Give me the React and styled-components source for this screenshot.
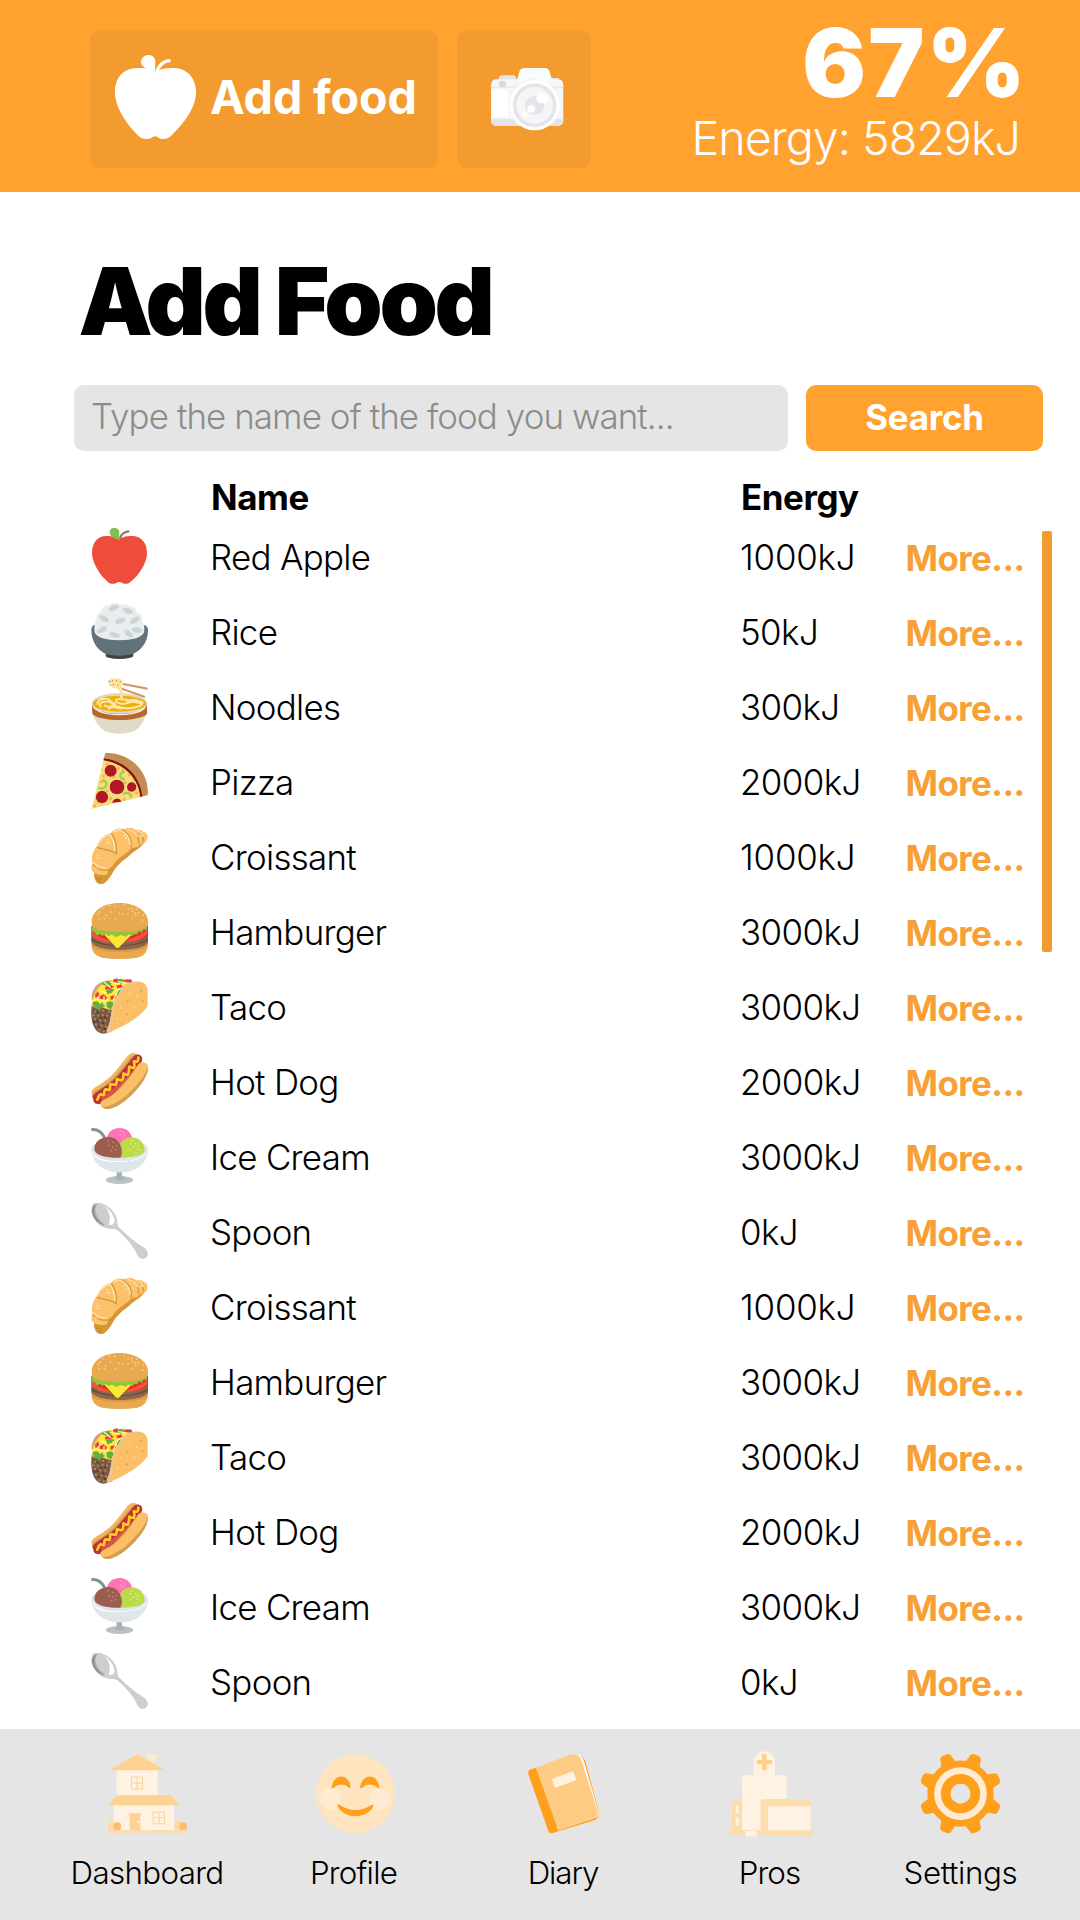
import React from "react";
import styled, { createGlobalStyle } from "styled-components";

const GlobalStyle = createGlobalStyle`
  *, *::before, *::after { box-sizing: border-box; }
  body { margin: 0; background: #fff; color: #000; font-family: Inter, "Liberation Sans", sans-serif; }
  button { border: 0; font: inherit; cursor: pointer; text-align: left; }
  svg { display: block; overflow: visible; flex: none; }
`;

const Screen = styled.div`
  width: 1080px;
  height: 1920px;
  display: flex;
  flex-direction: column;
  overflow: hidden;
`;

const Header = styled.header`
  height: 192px;
  flex: none;
  display: flex;
  justify-content: space-between;
  padding-left: 90px;
  background: #ffa230;
  color: #fff;
`;

const HeaderActions = styled.div`
  display: flex;
  gap: 19px;
  padding-top: 30px;
`;

const HeaderButton = styled.button`
  width: ${(p) => p.$width}px;
  height: 138px;
  display: flex;
  align-items: center;
  gap: 14px;
  padding: ${(p) => p.$padding};
  border-radius: 10px;
  background: #f39b2f;
  color: #fff;
  font-size: 46.6px;
  font-weight: 650;
  line-height: 60px;
  letter-spacing: -0.1px;
  white-space: nowrap;
`;

const Stats = styled.div`
  padding: 16px 60px 0 0;
  text-align: right;
  white-space: nowrap;
`;

const Percent = styled.div`
  margin-right: -7.5px;
  font-size: 94.5px;
  font-weight: 900;
  line-height: 94px;
  letter-spacing: 2.2px;
`;

const EnergyTotal = styled.div`
  font-size: 46.6px;
  font-weight: 285;
  line-height: 56px;
  letter-spacing: -0.98px;
`;

const Title = styled.h1`
  margin: 62px 0 37px 78.5px;
  font-size: 93.5px;
  font-weight: 900;
  line-height: 94px;
  letter-spacing: -3.33px;
`;

const SearchRow = styled.div`
  display: flex;
  gap: 18px;
  height: 66px;
  margin-left: 74px;
  font-size: 34.9px;
  line-height: 64px;
`;

const SearchField = styled.div`
  width: 714px;
  padding-left: 17px;
  border-radius: 10px;
  background: #e5e5e5;
  color: #8c8c8c;
  font-weight: 270;
  line-height: 63px;
  letter-spacing: -0.91px;
  white-space: nowrap;
`;

const SearchButton = styled.button`
  width: 237px;
  padding: 0 0 2px;
  border-radius: 10px;
  background: #ffa230;
  color: #fff;
  font-weight: 650;
  letter-spacing: -0.2px;
  && { text-align: center; line-height: 62px; }
`;

const Row = styled.div`
  display: grid;
  grid-template-columns: 119px 530px 165.5px 1fr;
  align-items: center;
  height: 75px;
  padding-left: 91px;
  font-size: 34.9px;
  font-weight: 270;
  line-height: 50px;
  letter-spacing: -0.7px;
  white-space: nowrap;
`;

const HeadRow = styled(Row)`
  height: 68px;
  padding: 21px 0 0 92px;
  font-weight: 650;
  letter-spacing: -0.4px;
`;

const List = styled.div`
  display: flex;
`;

const Rows = styled.div`
  width: 1042px;
`;

const Cell = styled.div`
  padding-top: 1px;
  letter-spacing: ${(p) => p.$tracking ?? "inherit"};
`;

const More = styled.a`
  padding-top: 2px;
  color: #f6a037;
  font-weight: 650;
  letter-spacing: -0.55px;
`;

const Scrollbar = styled.div`
  width: 10px;
  height: 421px;
  margin-top: 12px;
  border-radius: 2px;
  background: #f39b2f;
`;

const Nav = styled.nav`
  height: 191px;
  margin-top: auto;
  flex: none;
  display: grid;
  grid-template-columns: repeat(4, 208px) 171px;
  padding-left: 43px;
  background: #e5e5e5;
`;

const NavItem = styled.a`
  display: flex;
  flex-direction: column;
  align-items: center;
  padding-top: 25px;
  font-size: 31.3px;
  font-weight: 270;
  line-height: 40px;
  letter-spacing: ${(p) => p.$tracking}px;

  svg { margin-bottom: 20px; }
`;

const NavLabel = styled.span`
  padding-right: ${(p) => p.$inset}px;
`;

const AppleShape = ({ body, leaf, stem }) => (
  <>
    <path fill={body} d="M148 59C140 50 125 48 110 48C80 48 66 70 66 100C66 130 93 170 113 185C121 193 135 193 140 188Q148 184 156 188C162 193 174 193 182 185C204 170 231 130 231 100C231 68 214 48 186 48C170 48 156 50 148 59Z" />
    <path fill={leaf} d="M148 59C130 56 119 48 119 36C119 21 141 19 147 31C149 37 147 48 148 59Z" />
    <path fill="none" stroke={stem} strokeWidth="6" d="M149 57Q155 36 178 34" />
  </>
);

const WhiteApple = () => (
  <svg width="81" height="84" viewBox="66 24 165 167" preserveAspectRatio="none">
    <path fill="#fff" d="M148 57C140 50 125 50 110 50C80 51 66 72 66 98C66 130 93 165 113 184C120 192 135 193 141 188Q148 183 154 188C161 193 174 192 181 184C204 162 231 130 231 98C231 70 214 51 186 50C170 50 158 51 150 59Z" />
    <path fill="#fff" d="M148 62C140 53 119 51 119 38C120 20 147 20 148 36Z" />
    <path fill="none" stroke="#fff" strokeWidth="6.5" d="M151 59Q157 36 179 35" />
  </svg>
);

const Camera = () => (
  <svg width="73" height="62.3" viewBox="1207 204 204 187" preserveAspectRatio="none">
    <path fill="#e3e5e8" d="M1229 240V233Q1230 226 1237 226H1270Q1277 226 1278 240ZM1374 234H1394Q1399 235 1399 242H1374Z" />
    <path fill="#f5f6f8" d="M1207 255Q1208 238 1223 238H1280L1286 216Q1289 204 1302 204H1355Q1368 204 1371 216L1377 238H1394Q1409 239 1409 255V362Q1408 377 1392 377H1224Q1208 377 1207 362Z" />
    <path fill="#fafbfc" d="M1282 240L1287 216Q1290 205 1302 205H1355Q1368 205 1371 216L1376 250H1350Q1325 220 1282 250Z" />
    <path fill="#e3e5e8" d="M1207 357H1409V362Q1408 377 1392 377H1224Q1208 377 1207 362ZM1207 260H1290V263H1207ZM1375 260H1409V263H1375Z" />
    <rect x="1209" y="269" width="46" height="82" rx="6" fill="#fff" />
    <circle cx="1239" cy="252" r="10" fill="#d6d8da" />
    <ellipse cx="1329" cy="316" rx="70" ry="75" fill="#fff" />
    <ellipse cx="1329" cy="316" rx="61" ry="66" fill="#e3e5e8" />
    <ellipse cx="1329" cy="316" rx="51" ry="55" fill="#f5f6f8" />
    <ellipse cx="1329" cy="316" rx="27" ry="29" fill="#e3e5e8" />
    <circle cx="1350" cy="294" r="16" fill="#fff" />
    <circle cx="1319" cy="327" r="11" fill="#fff" />
    <circle cx="1301" cy="345" r="7" fill="#fff" />
  </svg>
);

const FoodSvg = ({ top, children }) => (
  <svg width="57" height="57" viewBox={`63 ${top} 171 171`}>{children}</svg>
);

const RedApple = () => (
  <FoodSvg top={24}><AppleShape body="#ef4d3c" leaf="#83bf4f" stem="#947151" /></FoodSvg>
);

const Rice = () => (
  <FoodSvg top={249}>
    <path fill="#3e4347" d="M107 400H190V409Q185 416 148 417Q111 416 107 409Z" />
    <path fill="#62727a" d="M64 331Q64 316 74 315H223Q234 318 234 333C233 370 210 394 188 402Q148 412 108 402C84 392 65 368 64 331Z" />
    <path fill="#e8edee" d="M74 337C72 324 74 308 79 300C76 288 84 278 92 276C96 262 108 253 118 254C127 247 144 247 150 254C164 250 178 254 183 261C194 259 200 270 198 276C210 277 219 290 215 301C221 308 225 325 222 337C218 352 188 361 148 361C108 361 78 352 74 337Z" />
    <g fill="#ced3d5">
      {[[131, 264, -22], [174, 273, 22], [102, 296, 28], [151, 303, -18], [194, 301, -32], [96, 330, -28], [201, 330, 10], [134, 345, 16], [176, 341, 42]].map(([x, y, r]) => (
        <ellipse key={x} cx={x} cy={y} rx="16" ry="8" transform={`rotate(${r} ${x} ${y})`} />
      ))}
    </g>
  </FoodSvg>
);

const Noodles = () => (
  <FoodSvg top={474}>
    <path fill="#e2dac8" d="M66 550H231C233 590 215 620 193 633Q148 650 104 633C81 618 64 590 66 550Z" />
    <path fill="#b7692b" d="M66 556Q148 604 231 556V582C205 606 92 606 67 582Z" />
    <ellipse cx="148.500" cy="550" rx="83" ry="31" fill="#e2dac8" />
    <path fill="#f1eee4" d="M67 556Q92 583 148 582Q205 582 230 556Q225 575 190 582Q148 590 107 582Q70 574 67 556Z" />
    <ellipse cx="148.500" cy="551" rx="80" ry="24" fill="#eeb00c" />
    <g fill="none" stroke="#ffe9a6" strokeWidth="6" strokeLinecap="round">
      <path d="M83 552C80 532 120 532 122 545S160 568 190 563S224 548 205 543S170 557 151 551S132 535 158 538S208 554 218 548" />
      <path d="M92 560C82 547 105 540 128 548S118 564 104 557M116 566Q128 556 152 566M170 546Q182 537 199 541" />
    </g>
    <path fill="none" stroke="#cf9564" strokeWidth="6" d="M116 484L233 506M119 493L225 531" />
    <path fill="none" stroke="#ffe09a" strokeWidth="9" d="M149 499Q156 518 154 541" />
    <path fill="#ffe4a0" d="M121 477Q129 470 135 478Q143 471 150 478Q160 476 158 486Q163 491 156 496Q155 507 146 502Q140 510 134 504Q126 507 125 498Q117 493 122 487Q117 482 121 477Z" />
    <g fill="#bc7945"><circle cx="127" cy="482" r="2" /><circle cx="140" cy="482" r="2" /><circle cx="151" cy="485" r="2" /><circle cx="130" cy="494" r="2" /><circle cx="144" cy="496" r="2" /></g>
  </FoodSvg>
);

const Pizza = () => (
  <FoodSvg top={699}>
    <path fill="#f7dc7f" d="M101 718C165 725 212 775 216 830L65 867Z" />
    <g fill="#ffae42">
      {[[112, 732], [145, 745], [101, 768], [132, 772], [178, 764], [94, 786], [111, 812], [165, 788], [194, 780], [199, 818], [84, 846], [74, 857], [122, 835], [177, 810], [163, 838], [158, 750]].map(([x, y]) => (
        <circle key={`${x}-${y}`} cx={x} cy={y} r="4.500" />
      ))}
    </g>
    <g fill="#b11725">
      <circle cx="122" cy="752" r="18" /><circle cx="141" cy="801" r="22" /><circle cx="96" cy="831" r="18.500" /><circle cx="185" cy="801" r="14" />
      <path d="M127 848A14 14 0 0 1 154 845Z" />
    </g>
    <g fill="none" stroke="#9ed052" strokeWidth="7"><path d="M165 755C145 758 147 776 165 779" /><path d="M96 780C118 784 112 812 84 804" /><path d="M160 824C165 814 186 818 182 833" /></g>
    <path fill="#890f16" d="M101 721V714C165 719 212 765 219 829L211 831C206 777 165 731 101 721Z" />
    <path fill="#c58c51" d="M106 699C180 696 240 757 233 826L217 829C210 766 164 723 102 715Z" />
  </FoodSvg>
);

const Croissant = () => (
  <FoodSvg top={39}>
    <path fill="#d79734" d="M74 174C68 190 83 207 96 207C108 205 117 190 126 177C137 155 155 139 176 124C188 112 198 105 208 99L230 76L70 130Z" />
    <path fill="#fcc16a" d="M83 90C90 70 106 55 124 53C133 42 149 38 159 43C171 38 187 36 198 45C209 42 219 46 221 51C232 52 236 67 230 76C224 85 210 86 202 97C188 96 181 102 173 111C158 121 139 135 132 146C128 154 120 158 116 163C112 177 112 178 104 181C90 184 75 177 66 168C62 160 65 151 68 147C62 127 68 108 83 90Z" />
    <path fill="#d79734" d="M72 174Q88 183 108 179Q112 190 104 203Q92 211 81 203Q72 192 72 174Z" />
    <path fill="none" stroke="#d79734" strokeWidth="4" d="M68 148C82 166 99 166 117 165M81 97C100 104 120 103 139 116C141 91 136 72 124 55M155 44C178 56 187 75 183 101M180 42Q207 57 207 88M200 47Q221 58 220 80" />
    <path fill="none" stroke="#ffe5ad" strokeWidth="4" d="M82 91C92 71 105 61 119 57C130 73 135 90 135 108M132 51C147 42 153 44 164 54Q180 67 180 89M70 142Q84 160 110 159M173 43Q192 45 202 65M199 47Q214 50 219 65" />
    <g fill="#ffe8b6">{[[112, 75], [118, 83], [111, 83], [84, 122], [89, 130], [80, 130], [163, 62], [169, 70], [213, 64], [78, 159], [195, 55]].map(([x, y]) => <circle key={`${x}-${y}`} cx={x} cy={y} r="2.500" />)}</g>
    <path fill="#b97a21" d="M80 186L85 190L81 195ZM91 187L96 190L91 195ZM85 199L90 196L92 202Z" />
  </FoodSvg>
);

const Hamburger = () => (
  <FoodSvg top={264}>
    <path fill="#e8a951" d="M65 388H233Q235 420 203 428Q148 436 96 428Q63 420 65 388Z" />
    <path fill="#dd9940" d="M65 384H233V395Q205 411 148 411Q91 411 65 395Z" />
    <path fill="#89664c" d="M64 362Q66 350 90 350H214Q233 352 234 366V382Q225 403 148 405Q75 403 64 382Z" />
    <path fill="#6c4a36" d="M64 369Q90 390 148 391Q210 390 234 369V376Q210 393 148 394Q90 393 64 376Z" />
    <path fill="#d73427" d="M64 333H234V364C208 386 89 388 64 360Z" />
    <path fill="#f75040" d="M67 344Q80 366 115 375L119 383Q86 380 66 362ZM168 382Q215 378 232 357L231 344Q210 364 176 372Z" />
    <path fill="#ffe62f" d="M96 352L137 396Q143 402 149 395L192 352Z" />
    <path fill="#8dc63f" d="M67 332Q148 356 231 332L230 347L222 343L214 354L207 348L202 358L193 357L186 364L177 358L166 365L154 360L137 366L126 359L115 363L107 357L97 363L90 357L81 361L73 351L66 348Z" />
    <path fill="#e8a951" d="M65 316C69 283 105 264 149 264C193 264 231 285 234 318V331C227 344 194 351 148 351C103 351 73 344 66 333Z" />
    <g fill="#f9cf8b">{[[98, 280], [119, 272], [135, 274], [90, 291], [108, 301], [122, 291], [84, 298], [88, 311], [103, 311], [136, 311], [148, 295], [160, 298], [162, 268], [175, 281], [185, 280], [187, 289], [174, 295], [196, 294], [205, 293], [197, 302], [187, 310], [200, 282], [219, 301], [218, 315]].map(([x, y]) => <circle key={`${x}-${y}`} cx={x} cy={y} r="2.800" />)}</g>
  </FoodSvg>
);

const Taco = () => (
  <FoodSvg top={489}>
    <path fill="#d9a27e" d="M65 550C65 517 86 497 121 496L120 502C91 507 75 529 71 564Z" />
    <path fill="#7a5841" d="M66 565Q92 545 128 574L114 652Q101 661 84 651C66 638 60 603 66 565Z" />
    <g fill="#b28260">{[[76, 590], [88, 584], [84, 602], [98, 600], [111, 602], [75, 612], [91, 616], [106, 617], [78, 629], [94, 632], [108, 635], [88, 645], [101, 649], [70, 601], [117, 590], [99, 587]].map(([x, y]) => <circle key={`${x}-${y}`} cx={x} cy={y} r="3.500" />)}</g>
    <g fill="#47362a">{[[82, 592], [94, 608], [82, 619], [99, 624], [88, 635], [105, 641], [106, 607], [72, 621]].map(([x, y]) => <circle key={`${x}-${y}`} cx={x} cy={y} r="3" />)}</g>
    <path fill="#ffe62f" d="M67 575C65 546 78 525 95 509C106 497 128 493 143 493C156 488 179 491 188 501L125 586L92 577Z" />
    <path fill="#65ad42" d="M94 507Q108 493 127 501Q124 514 106 512ZM140 494Q158 488 166 499L151 507L137 502ZM108 527Q121 517 134 526Q124 538 109 537ZM68 561Q85 554 88 567Q109 555 103 575Q88 587 72 579ZM110 561Q128 554 131 566L123 584L110 576ZM136 530L153 518L162 525L143 543ZM164 494Q181 491 188 502L173 508Z" />
    <path fill="#ed3653" d="M130 493L143 490L142 502L130 504ZM105 516L124 510L132 516L121 522L106 524ZM139 512L152 507L158 516L143 521ZM89 544L101 538L112 548L105 555L89 553ZM75 540L84 528L88 540L77 550ZM121 544L139 540L137 550L122 555ZM162 495L183 493L187 500L166 504Z" />
    <path fill="none" stroke="#fff7a0" strokeWidth="4" d="M102 501L122 518M120 502L151 507M78 552L115 559M92 528L111 534M128 532L160 518M68 558L84 550M144 500L178 505M102 544L102 570M147 520L131 553" />
    <path fill="#efc391" d="M113 654Q106 649 114 635C126 610 121 570 145 537C158 509 181 496 209 500L221 506L126 650Z" />
    <path fill="#fbbf67" d="M120 651C133 620 125 584 146 550C157 524 181 500 211 501Q235 504 233 536V574C212 604 173 626 146 639Z" />
    <g fill="#d99141">{[[213, 527], [173, 559], [219, 558], [171, 598]].map(([x, y]) => <circle key={x} cx={x} cy={y} r="2.500" />)}</g>
    <g fill="#ffe2a6">{[[179, 534], [201, 545], [152, 578], [193, 577], [143, 611]].map(([x, y]) => <circle key={x} cx={x} cy={y} r="2.500" />)}</g>
  </FoodSvg>
);

const HotDog = () => (
  <FoodSvg top={714}>
    <path fill="#f0b55f" d="M66 839C59 824 77 817 95 805C130 783 145 758 168 729C178 713 193 710 202 719L95 838L72 855Z" />
    <path fill="#d39e4f" d="M67 847C61 833 85 824 104 811C137 789 160 753 183 727Q193 716 204 721L94 843L75 856Z" />
    <path fill="#b93437" d="M70 853C62 840 80 832 99 818C139 796 159 763 189 727C196 716 211 715 216 727C220 740 206 758 196 775C163 812 121 847 96 865C83 871 69 866 70 853Z" />
    <path fill="#dd5247" d="M90 849Q145 813 182 774L201 754L180 792L101 859Z" />
    <path fill="none" stroke="#ffcb22" strokeWidth="8" strokeLinecap="round" strokeLinejoin="round" d="M82 854C89 833 92 838 99 840S100 822 108 823S119 829 120 819S117 807 127 808S138 813 140 802S137 791 146 794S158 797 160 785S156 774 166 778S175 777 177 766S174 752 184 757S193 758 193 748S188 738 197 740Q205 742 205 728" />
    <path fill="#d39e4f" d="M93 870C134 837 171 795 200 757Q211 739 230 746Q240 764 224 791C198 835 143 884 109 882Q95 879 93 870Z" />
    <path fill="#fbbf67" d="M91 865C93 855 111 852 127 840C159 817 180 787 199 757C208 738 223 738 232 749C235 774 201 812 166 844C139 865 119 875 100 875Q90 875 91 865Z" />
  </FoodSvg>
);

const IceCream = () => (
  <FoodSvg top={54}>
    <path fill="none" stroke="#82948f" strokeWidth="9" d="M64 59Q89 55 105 84" />
    <path fill="#dee6ea" d="M64 115Q67 102 79 101H217Q231 101 234 119C232 158 203 187 150 187C98 188 65 157 64 115Z" />
    <path fill="#fff" d="M68 124Q78 154 148 154Q215 154 230 124Q226 146 187 153Q105 162 77 143Q69 137 68 124Z" />
    <path fill="#ff73b5" d="M108 99C110 68 126 54 149 54C172 54 187 68 189 101L150 119Z" />
    <path fill="#bbdb48" d="M145 143C142 106 154 83 185 82C211 83 224 102 224 123Q219 140 164 143Z" />
    <path fill="#9b5d50" d="M73 119C72 96 92 81 116 81C143 82 158 106 155 133L151 143C111 144 78 137 73 119Z" />
    <g fill="#edf0a8">{[[186, 93], [181, 101], [197, 101], [204, 107], [190, 112], [201, 117], [180, 119], [209, 120], [198, 128]].map(([x, y]) => <circle key={x} cx={x} cy={y} r="2.300" />)}</g>
    <g fill="#cb9b8f">{[[114, 93], [129, 97], [139, 107], [117, 107], [128, 111], [137, 119], [125, 122]].map(([x, y]) => <circle key={x} cx={x} cy={y} r="2.200" />)}</g>
    <g fill="#ffb2d8">{[[153, 64], [161, 70], [151, 74], [164, 77], [156, 81]].map(([x, y]) => <circle key={x} cx={x} cy={y} r="2.200" />)}</g>
    <ellipse cx="148.500" cy="210" rx="41" ry="12" fill="#b9c2c6" />
    <path fill="#a9b1b7" d="M140 187H156Q155 202 165 208Q148 214 133 208Q141 202 140 187Z" />
  </FoodSvg>
);

const Spoon = () => (
  <FoodSvg top={279}>
    <path fill="#cecece" d="M69 281C94 271 129 293 139 322C145 337 139 346 150 355C169 374 193 396 219 411C233 419 239 434 228 443C216 452 204 443 199 428C184 401 161 377 142 361C128 352 119 362 101 352C75 341 54 304 69 281Z" />
    <path fill="#868b90" d="M73 286C54 306 79 344 104 346C90 330 65 311 82 282Z" />
    <path fill="#a6abae" d="M79 284C62 304 80 336 101 344L107 340L80 296Z" />
    <path fill="#cecece" d="M82 282C64 304 91 342 115 347C119 317 116 300 102 288Q91 281 82 282Z" />
    <path fill="#fff" d="M102 289C121 305 123 327 116 344Q127 347 133 338C137 322 120 298 102 289Z" />
  </FoodSvg>
);

const House = () => (
  <svg width="79" height="79.300" viewBox="174 101 237 238">
    <path fill="#feead0" d="M288 101H321V111H316V132L292 120V111H288Z" />
    <path fill="#fff2e2" d="M200 149H323V226H200ZM191 254H372V330H191Z" />
    <path fill="#fed293" d="M262 101L345 150H178ZM201 225H362L388 255H174Z" />
    <path fill="#fddcae" d="M174 330H411V339H174ZM174 304Q181 297 190 301V330H174ZM372 330V307Q382 295 391 303V330Z" />
    <g fill="#fdc173"><rect x="190" y="306" width="23" height="24" rx="8" /><rect x="388" y="306" width="23" height="24" rx="8" /></g>
    <path fill="none" stroke="#f9ad4c" strokeWidth="3" strokeDasharray="3 5" d="M195 314H209M197 321H210M393 314H407M395 321H408M178 318H187M377 318H386" />
    <path fill="#fed293" d="M236 279H274V285H271V330H239V285H236Z" />
    <path fill="#fff2e2" d="M261 302H264V299H267V302H271V305H267V309H264V305H261Z" />
    <path fill="none" stroke="#fed293" strokeWidth="3" d="M244.500 170.500H277.500V206.500H244.500ZM261 170V206M244 188H278M309.500 275.500H343.500V310.500H309.500ZM327 275V310M309 292H344" />
  </svg>
);

const Smile = () => (
  <svg width="79" height="79.300" viewBox="799 101 237 238">
    <circle cx="917.500" cy="220" r="118.500" fill="#ffe4c0" />
    <circle cx="843" cy="236" r="32" fill="#feebd2" /><circle cx="991" cy="236" r="32" fill="#feebd2" />
    <path fill="#ff9f1c" d="M846 200C852 159 897 158 903 200Q903 205 898 202Q874 183 852 202Q846 206 846 200ZM931 200C938 159 983 158 989 200Q990 206 984 202Q960 183 937 202Q932 206 931 200ZM863 252Q866 250 870 254Q917 284 966 254Q971 250 972 255C969 269 946 288 917 288C889 288 865 270 863 252Z" />
  </svg>
);

const Diary = () => (
  <svg width="71" height="79.300" viewBox="86 101 213 238">
    <path fill="#ff9f1c" d="M240 106Q254 109 259 126L299 276Q300 295 284 300L160 338L120 250Z" />
    <path fill="#fff5e8" d="M232 102Q249 105 254 122L298 276Q300 291 284 294L170 332Z" />
    <path fill="#fecb84" d="M111 142L211 103Q238 97 246 121L294 270Q300 286 282 293L177 330Z" />
    <path fill="#ff9f1c" d="M111 142L177 330L159 338Q151 341 147 332L87 161Q84 151 94 147Z" />
    <path fill="none" stroke="#fff1dc" strokeWidth="1.500" strokeDasharray="3 2" d="M111 142L177 330" />
    <path fill="#fff2e2" d="M158 176L221 153L231 179L167 203Z" />
  </svg>
);

const Hospital = () => (
  <svg width="84" height="79.300" viewBox="691 101 252 238">
    <path fill="#fddcae" d="M700 331V258Q702 240 716 236H732V331ZM691 335Q691 330 697 330H937Q943 331 943 337V347H691Z" />
    <path fill="#fff2e2" d="M730 330V176Q731 165 742 165H765V126A32 33 0 0 1 829 126V165H853Q864 166 864 177V330ZM741 332H774V348H741ZM711 255H720V279H711ZM711 291H720V316H711Z" />
    <path fill="#fddcae" d="M786 331V242Q787 236 793 236H926Q936 237 936 246V331Z" />
    <path fill="#fff2e2" d="M808 264Q808 258 814 258H936V330H808Z" />
    <path fill="#fed08d" d="M790 101H804V119H820V132H804V150H790V132H774V119H790Z" />
  </svg>
);

const Gear = () => (
  <svg width="79" height="79.300" viewBox="183 101 237 238">
    <g fill="#ff9f1c">
      {[0, 1, 2, 3, 4, 5, 6, 7].map((i) => (
        <path key={i} transform={`translate(301.500 220) rotate(${22.5 + i * 45})`} d="M-24 -90L-17 -118Q-14 -125 -7 -125H7Q14 -125 17 -118L24 -90Z" />
      ))}
    </g>
    <circle cx="301.500" cy="220" r="64.500" fill="none" stroke="#ff9f1c" strokeWidth="70" />
    <circle cx="301.500" cy="220" r="69" fill="none" stroke="#ffebd3" strokeWidth="20" />
    <circle cx="301.500" cy="220" r="29.500" fill="#e5e5e5" />
  </svg>
);

const foods = {
  apple: ["Red Apple", "1000kJ", RedApple],
  rice: ["Rice", "50kJ", Rice],
  noodles: ["Noodles", "300kJ", Noodles],
  pizza: ["Pizza", "2000kJ", Pizza],
  croissant: ["Croissant", "1000kJ", Croissant],
  hamburger: ["Hamburger", "3000kJ", Hamburger],
  taco: ["Taco", "3000kJ", Taco],
  hotDog: ["Hot Dog", "2000kJ", HotDog],
  iceCream: ["Ice Cream", "3000kJ", IceCream],
  spoon: ["Spoon", "0kJ", Spoon],
};

const results = [
  "apple", "rice", "noodles", "pizza", "croissant", "hamburger", "taco", "hotDog", "iceCream", "spoon",
  "croissant", "hamburger", "taco", "hotDog", "iceCream", "spoon",
];

const tabs = [
  ["Dashboard", House, -0.65, 0],
  ["Profile", Smile, -0.75, 3],
  ["Diary", Diary, -1.1, 0],
  ["Pros", Hospital, -0.9, 3],
  ["Settings", Gear, -0.35, 0],
];

export default function App() {
  return (
    <Screen>
      <GlobalStyle />
      <Header>
        <HeaderActions>
          <HeaderButton $width={348} $padding="0 0 5px 25px"><WhiteApple />Add food</HeaderButton>
          <HeaderButton $width={134} $padding="0 0 0 34px" aria-label="Camera"><Camera /></HeaderButton>
        </HeaderActions>
        <Stats>
          <Percent>67%</Percent>
          <EnergyTotal>Energy: 5829kJ</EnergyTotal>
        </Stats>
      </Header>
      <Title>Add Food</Title>
      <SearchRow>
        <SearchField>Type the name of the food you want...</SearchField>
        <SearchButton>Search</SearchButton>
      </SearchRow>
      <HeadRow>
        <span />
        <span>Name</span>
        <span>Energy</span>
      </HeadRow>
      <List>
        <Rows>
          {results.map((id, i) => {
            const [name, energy, Icon] = foods[id];
            return (
              <Row key={i}>
                <Icon />
                <Cell>{name}</Cell>
                <Cell $tracking={energy.startsWith("1") ? "-0.2px" : "-0.6px"}>{energy}</Cell>
                <More>More...</More>
              </Row>
            );
          })}
        </Rows>
        <Scrollbar />
      </List>
      <Nav>
        {tabs.map(([label, Icon, tracking, inset]) => (
          <NavItem key={label} $tracking={tracking}>
            <Icon />
            <NavLabel $inset={inset}>{label}</NavLabel>
          </NavItem>
        ))}
      </Nav>
    </Screen>
  );
}
